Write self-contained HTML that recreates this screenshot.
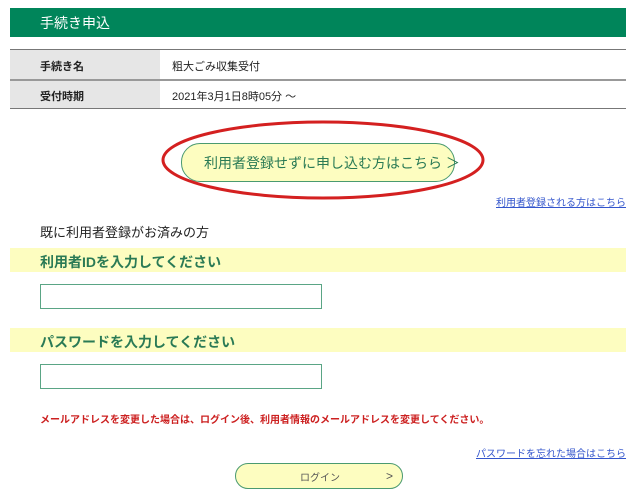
<!DOCTYPE html>
<html><head><meta charset="utf-8"><style>
body{margin:0;width:640px;height:495px;background:#fff;font-family:"Liberation Sans","Noto Sans CJK JP",sans-serif;position:relative;overflow:hidden}
.a{position:absolute}
</style></head><body>
<div class="a" style="left:10px;top:8px;width:616px;height:29px;background:#00855a"></div>
<div class="a" style="left:40px;top:15px;color:#fff;font-size:14px;line-height:17px">手続き申込</div>
<div class="a" style="left:10px;top:49px;width:616px;height:1px;background:#777"></div>
<div class="a" style="left:10px;top:50px;width:150px;height:29px;background:#e6e6e6"></div>
<div class="a" style="left:10px;top:79px;width:616px;height:2px;background:#999"></div>
<div class="a" style="left:10px;top:81px;width:150px;height:27px;background:#e6e6e6"></div>
<div class="a" style="left:10px;top:108px;width:616px;height:1px;background:#777"></div>
<div class="a" style="left:40px;top:58px;font-size:11px;font-weight:bold;color:#222">手続き名</div>
<div class="a" style="left:172px;top:58px;font-size:11px;color:#222">粗大ごみ収集受付</div>
<div class="a" style="left:40px;top:88px;font-size:11px;font-weight:bold;color:#222">受付時期</div>
<div class="a" style="left:172px;top:88px;font-size:11px;color:#222">2021年3月1日8時05分 ～</div>
<div class="a" style="left:181px;top:143px;width:272px;height:37px;border:1px solid #4a9a70;border-radius:19px;background:#fdfdc0"></div>
<div class="a" style="left:204px;top:153px;font-size:14px;color:#2a7a55;white-space:nowrap">利用者登録せずに申し込む方はこちら ＞</div>
<svg class="a" style="left:158px;top:118px" width="330" height="84"><ellipse cx="165" cy="42" rx="160" ry="38" fill="none" stroke="#d42020" stroke-width="3"/></svg>
<div class="a" style="right:14px;top:194px;font-size:10px;color:#3355cc;text-decoration:underline">利用者登録される方はこちら</div>
<div class="a" style="left:40px;top:222px;font-size:13px;color:#222">既に利用者登録がお済みの方</div>
<div class="a" style="left:10px;top:248px;width:616px;height:24px;background:#fdfdc0"></div>
<div class="a" style="left:40px;top:252px;font-size:14px;font-weight:bold;color:#2a7a55">利用者IDを入力してください</div>
<div class="a" style="left:40px;top:284px;width:280px;height:23px;border:1px solid #5aa585;background:#fff"></div>
<div class="a" style="left:10px;top:328px;width:616px;height:24px;background:#fdfdc0"></div>
<div class="a" style="left:40px;top:332px;font-size:14px;font-weight:bold;color:#2a7a55">パスワードを入力してください</div>
<div class="a" style="left:40px;top:364px;width:280px;height:23px;border:1px solid #5aa585;background:#fff"></div>
<div class="a" style="left:40px;top:411px;font-size:10px;font-weight:bold;color:#cc2020">メールアドレスを変更した場合は、ログイン後、利用者情報のメールアドレスを変更してください。</div>
<div class="a" style="right:14px;top:445px;font-size:10px;color:#3355cc;text-decoration:underline">パスワードを忘れた場合はこちら</div>
<div class="a" style="left:235px;top:463px;width:166px;height:24px;border:1px solid #4a9a70;border-radius:13px;background:#fdfdc0"></div>
<div class="a" style="left:300px;top:469px;font-size:10px;color:#555">ログイン</div>
<div class="a" style="left:386px;top:468px;font-size:12px;line-height:16px;color:#555">&gt;</div>
</body></html>
